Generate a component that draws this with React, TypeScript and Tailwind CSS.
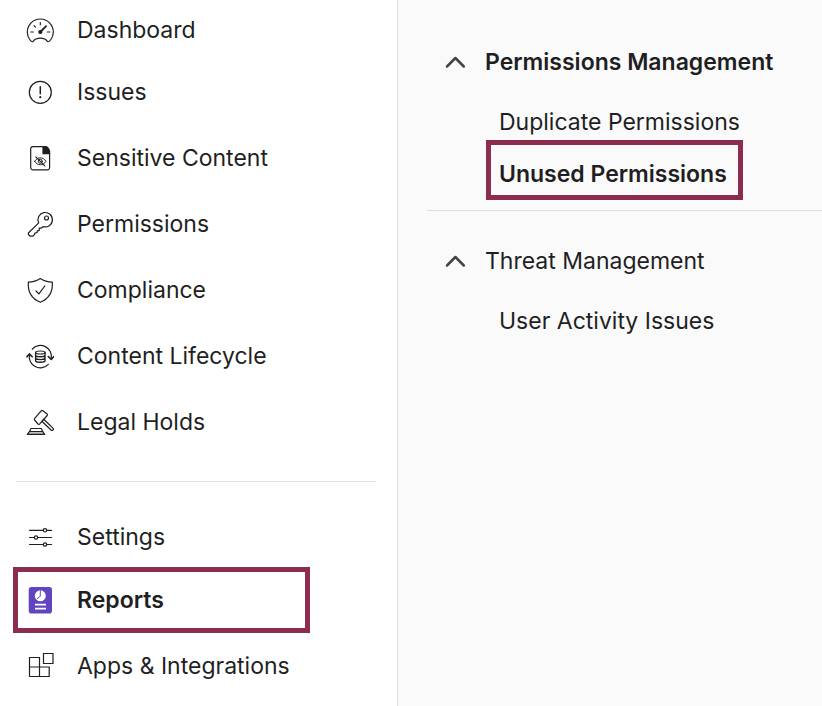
import { useState } from "react";
import type { ReactNode } from "react";

type NavItem = {
  label: string;
  icon: ReactNode;
};

// Shared wrapper for the thin outline icons
const Icon = ({ children }: { children: ReactNode }) => (
  <svg
    viewBox="0 0 28 28"
    className="size-7 shrink-0"
    fill="none"
    stroke="currentColor"
    strokeWidth="1.2"
    strokeLinecap="round"
    strokeLinejoin="round"
    aria-hidden="true"
  >
    {children}
  </svg>
);

const DashboardIcon = () => (
  <Icon>
    <path d="M7 25.6C5.8 26.4 1.3 22.4 1.3 16a13 13 0 0 1 26 0c0 6.4-4.5 10.4-5.7 9.6C18.5 21 10.1 21 7 25.6Z" />
    <path d="M14.3 6.5v2.2M4.8 16h2.5M21.3 16h2.5M8 9.700l1.400 1.400" />
    <path d="M14.3 16l5.800-5.800" strokeWidth="1.8" />
    <circle cx="14.3" cy="16" r="1.5" fill="currentColor" />
  </Icon>
);

const IssuesIcon = () => (
  <Icon>
    <circle cx="14.3" cy="14.3" r="11" />
    <path d="M14.3 8.800v7" strokeWidth="1.5" />
    <circle cx="14.3" cy="19.2" r="0.5" fill="currentColor" />
  </Icon>
);

const SensitiveIcon = () => (
  <Icon>
    <path d="M17 2.600H7a2.300 2.300 0 0 0-2.300 2.300v18.600A2.300 2.300 0 0 0 7 25.800h14.300a2.300 2.300 0 0 0 2.300-2.300V9.500L22 4.500Q21 2.600 19 2.600Z" />
    <path d="M17 2.600v7h6.600V7Q22.500 3 19 2.600Z" fill="currentColor" />
    <path d="M8.600 17.300c3-4.700 8.400-4.700 11.400 0-3 4.700-8.400 4.700-11.400 0Z" strokeWidth="1" />
    <circle cx="14.3" cy="17.3" r="2" strokeWidth="1" />
    <path d="M9.800 12.800l9 9" />
  </Icon>
);

const KeyIcon = () => (
  <Icon>
    <path d="M12.700 12.900A7.200 7.200 0 1 1 17 16.600L15.300 18.200H13.200V20.300L11.300 20.800L11 22.700L8.900 23L8.600 24.400L6.700 26.200H4.200L2.400 24.500V23Z" />
    <circle cx="20.5" cy="8" r="2" />
  </Icon>
);

const ShieldIcon = () => (
  <Icon>
    <path d="M14.300 2.600c3.300 2.300 7.300 3.500 12 3.600.6 9-3.200 16.400-12 20-8.800-3.600-12.600-11-12-20 4.700-.1 8.700-1.300 12-3.600Z" />
    <path d="M10 15l2.900 2.900L18.800 10" />
  </Icon>
);

const LifecycleIcon = () => (
  <Icon>
    <path d="M6.300 7A11 11 0 0 1 25.200 16.500M22.300 22.300A11 11 0 0 1 3.500 12.500" />
    <path d="M22.300 14.500l2.900 2.900 2.400-2.700M1 14.800l2.300-2.900L6.200 14.800" strokeWidth="1.6" />
    <ellipse cx="14.3" cy="10.5" rx="4.700" ry="1.500" />
    <path d="M9.600 10.500v8.300c0 2 9.400 2 9.400 0v-8.300M9.600 13.300c0 2 9.400 2 9.400 0M9.600 16.100c0 2 9.400 2 9.400 0" strokeWidth="1.4" />
  </Icon>
);

const GavelIcon = () => (
  <Icon>
    <path d="M15.200 2.900q.8-.9 1.700-.2l4.200 3.200q.8.700.1 1.600l-7.700 8.600q-.8.800-1.500-.1l-3.400-4q-.6-.8.100-1.600Z" />
    <path d="M15.900 13.300l1.900-2.100 9.100 8.900q.9 1.100 0 2-.9.800-1.900-.1Z" />
    <path d="M5 20.500h10.200l1.500 3H3.500Z" />
    <path d="M3.500 23.500h13.200l2 2.900H1.300Z" fill="#bdbdbd" />
  </Icon>
);

const SettingsIcon = () => (
  <Icon>
    <path d="M3.500 7.300h13.700M20.800 7.300h4.700M3.500 14.500h4.700M11.800 14.500h13.700M3.500 21.500h13.700M20.800 21.500h4.700" />
    <circle cx="19" cy="7.300" r="1.700" />
    <circle cx="10" cy="14.500" r="1.700" />
    <circle cx="19" cy="21.500" r="1.700" />
  </Icon>
);

const ReportsIcon = () => (
  <svg viewBox="0 0 28 28" className="size-7 shrink-0" aria-hidden="true">
    <rect x="2.700" y="1" width="23.300" height="26.500" rx="2.800" fill="#6244bf" />
    <circle cx="14.3" cy="9.800" r="5.500" fill="#fff" />
    <path d="M14.300 4v6.300l-3.500 2.500" fill="none" stroke="#6244bf" strokeWidth="1" />
    <path d="M9 18.700h11M9 22.600h11" stroke="#fff" strokeWidth="1.800" />
  </svg>
);

const AppsIcon = () => (
  <Icon>
    <path d="M3.500 5.500h10v19h-10ZM3.500 15h19.700v9.500H13.500M17.500 1.500h9.500v10h-9.500Z" strokeLinejoin="miter" />
  </Icon>
);

const mainItems: NavItem[] = [
  { label: "Issues", icon: <IssuesIcon /> },
  { label: "Sensitive Content", icon: <SensitiveIcon /> },
  { label: "Permissions", icon: <KeyIcon /> },
  { label: "Compliance", icon: <ShieldIcon /> },
  { label: "Content Lifecycle", icon: <LifecycleIcon /> },
  { label: "Legal Holds", icon: <GavelIcon /> },
];

// Chevron that points up while its section is open
const Chevron = ({ open }: { open: boolean }) => (
  <svg
    viewBox="0 0 24 24"
    className={`size-6 shrink-0 ${open ? "" : "rotate-180"}`}
    fill="none"
    stroke="#444446"
    strokeWidth="2.5"
    strokeLinecap="round"
    strokeLinejoin="round"
    aria-hidden="true"
  >
    <path d="M4 16.500l8.400-8.500 8.400 8.500" />
  </svg>
);

const SidebarLink = ({ label, icon }: NavItem) => (
  <a href="#" className="flex h-[66px] items-center gap-[23px] pl-[26px]">
    {icon}
    <span>{label}</span>
  </a>
);

const App = () => {
  const [permissionsOpen, setPermissionsOpen] = useState(true);
  const [threatOpen, setThreatOpen] = useState(true);

  return (
    <div className="flex min-h-screen bg-white font-['Inter',sans-serif] text-[23px] text-[#1f1f23]">
      {/* Sidebar */}
      <nav className="w-[398px] shrink-0 border-r border-[#dfdfe2] pt-px">
        <a href="#" className="flex h-[58px] items-center gap-[23px] pl-[26px]">
          <DashboardIcon />
          <span>Dashboard</span>
        </a>
        {mainItems.map((item) => (
          <SidebarLink key={item.label} {...item} />
        ))}

        <hr className="mt-[26px] mr-[21px] mb-[25px] ml-4 border-[#dfdfe2]" />

        <a href="#" className="flex h-[60px] items-center gap-[23px] pl-[26px]">
          <SettingsIcon />
          <span>Settings</span>
        </a>
        <a
          href="#"
          aria-current="page"
          className="mr-[87px] ml-[13px] flex h-[66px] items-center gap-[23px] border-5 border-[#8b2c50] pl-2 font-semibold"
        >
          <ReportsIcon />
          <span>Reports</span>
        </a>
        <SidebarLink label="Apps & Integrations" icon={<AppsIcon />} />
      </nav>

      {/* Report list */}
      <main className="min-w-0 flex-1 bg-[#fafafa] pt-8">
        <button
          onClick={() => setPermissionsOpen(!permissionsOpen)}
          aria-expanded={permissionsOpen}
          className="flex h-[60px] items-center gap-[18px] pl-[45px] font-semibold whitespace-nowrap"
        >
          <Chevron open={permissionsOpen} />
          Permissions Management
        </button>
        {permissionsOpen && (
          <div className="flex flex-col items-start pt-3 pl-[88px] whitespace-nowrap">
            <a href="#" className="flex h-9 items-center pl-[13px]">
              Duplicate Permissions
            </a>
            <a
              href="#"
              className="flex h-[60px] items-center border-5 border-[#8b2c50] pt-2 pr-[11px] pl-2 font-semibold"
            >
              Unused Permissions
            </a>
          </div>
        )}

        <hr className="mt-[10px] mb-5 ml-[29px] border-[#dfdfe2]" />

        <button
          onClick={() => setThreatOpen(!threatOpen)}
          aria-expanded={threatOpen}
          className="flex h-[60px] items-center gap-[18px] pl-[45px] whitespace-nowrap"
        >
          <Chevron open={threatOpen} />
          Threat Management
        </button>
        {threatOpen && (
          <div className="flex flex-col items-start pt-3 pl-[88px] whitespace-nowrap">
            <a href="#" className="flex h-9 items-center pl-[13px]">
              User Activity Issues
            </a>
          </div>
        )}
      </main>
    </div>
  );
};

export default App;
